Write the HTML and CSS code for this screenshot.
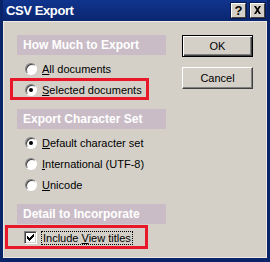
FILE: index.html
```html
<!DOCTYPE html>
<html>
  <head>
    <meta charset="UTF-8">
    <title>CSV Export</title>
    <link rel="stylesheet" href="styles.css">
  </head>
  <body>
    <div class="window">
      <div class="titlebar">
        <span class="title">CSV Export</span>
        <span class="caption-btns">
          <span class="cap-btn">?</span>
          <span class="cap-btn">
            <svg width="9" height="8" viewBox="0 0 9 8">
              <path d="M1 0h2l1.5 2.5L6 0h2L5.5 4 8 8H6L4.5 5.5 3 8H1l2.5-4z" fill="#000"/>
            </svg>
          </span>
        </span>
      </div>

      <div class="client">
        <div class="options">
          <section class="group">
            <div class="group-head">How Much to Export</div>
            <div class="row"><span class="radio"></span><span><u>A</u>ll documents</span></div>
            <div class="row"><span class="radio checked"></span><span><u>S</u>elected documents</span></div>
          </section>

          <section class="group">
            <div class="group-head">Export Character Set</div>
            <div class="row"><span class="radio checked"></span><span><u>D</u>efault character set</span></div>
            <div class="row"><span class="radio"></span><span><u>I</u>nternational (UTF-8)</span></div>
            <div class="row"><span class="radio"></span><span><u>U</u>nicode</span></div>
          </section>

          <section class="group">
            <div class="group-head">Detail to Incorporate</div>
            <div class="row">
              <span class="checkbox">
                <svg width="7" height="7" viewBox="0 0 7 7">
                  <path d="M0 2h1v1h1v1h1V3h1V2h1V1h1V0h1v3H6v1H5v1H4v1H3v1H2V6H1V5H0z" fill="#000"/>
                </svg>
              </span>
              <span class="focus">Include <u>V</u>iew titles</span>
            </div>
          </section>
        </div>

        <div class="actions">
          <button class="btn default">OK</button>
          <button class="btn">Cancel</button>
        </div>

        <!-- annotation boxes drawn over the dialog -->
        <span class="mark mark-selected"></span>
        <span class="mark mark-titles"></span>
      </div>
    </div>
  </body>
</html>
```

FILE: styles.css
```css
html * {
  box-sizing: border-box;
}

body {
  margin: 0;
  background: #0a246a;
  font-family: "Liberation Sans", Arial, sans-serif;
  font-size: 11px;
  color: #000;
}

.window {
  width: 270px;
  height: 262px;
  padding: 0 3px 4px 3px;
  display: flex;
  flex-direction: column;
  background: #0a246a;
}

.titlebar {
  height: 21px;
  display: flex;
  align-items: center;
  justify-content: space-between;
  padding: 0 2px 1px 3px;
  background: linear-gradient(#10348e, #0a2670);
}

.title {
  color: #fff;
  font-weight: bold;
  font-size: 13px;
  letter-spacing: -0.4px;
}

.caption-btns {
  display: flex;
  gap: 4px;
}

.cap-btn {
  width: 15px;
  height: 15px;
  display: flex;
  align-items: center;
  justify-content: center;
  background: #d4d0c8;
  border: 1px solid;
  border-color: #fff #404040 #404040 #fff;
  box-shadow: 0 0 0 1px #061a4e;
  font-weight: bold;
  font-size: 13px;
  line-height: 1;
}

.client {
  position: relative;
  flex: 1;
  display: flex;
  gap: 16px;
  padding: 13px 0 0 13px;
  background: #d4d0c8;
  border: 1px solid #ece9e2;
}

.options {
  width: 149px;
  display: flex;
  flex-direction: column;
  gap: 9px;
}

.group-head {
  height: 20px;
  line-height: 20px;
  padding-left: 6px;
  margin-bottom: 3px;
  background: #c9bcc6;
  color: #fff;
  font-weight: bold;
  font-size: 12px;
}

.row {
  height: 21px;
  display: flex;
  align-items: center;
  padding-left: 8px;
  gap: 5px;
}

.radio {
  width: 12px;
  height: 12px;
  flex: none;
  border-radius: 50%;
  background: #fff;
  border: 1px solid;
  border-color: #808080 #fff #fff #808080;
  box-shadow: inset 1px 1px 0 #404040;
  display: flex;
  align-items: center;
  justify-content: center;
}

.radio.checked::after {
  content: "";
  width: 4px;
  height: 4px;
  border-radius: 50%;
  background: #000;
}

.checkbox {
  width: 13px;
  height: 13px;
  flex: none;
  margin-left: -1px;
  background: #fff;
  border: 1px solid;
  border-color: #808080 #fff #fff #808080;
  box-shadow: inset 1px 1px 0 #404040, inset -1px -1px 0 #d4d0c8;
  display: flex;
  align-items: center;
  justify-content: center;
}

.focus {
  padding: 0 1px;
  outline: 1px dotted #000;
  line-height: 12px;
}

.actions {
  display: flex;
  flex-direction: column;
  gap: 10px;
}

.btn {
  width: 71px;
  height: 22px;
  padding: 0;
  font-family: inherit;
  font-size: 11px;
  color: #000;
  background: #d4d0c8;
  border: 1px solid;
  border-color: #fff #404040 #404040 #fff;
  box-shadow: inset -1px -1px 0 #808080;
}

.btn.default {
  border: 1px solid #000;
  box-shadow: inset 1px 1px 0 #fff, inset -1px -1px 0 #404040, inset -2px -2px 0 #808080;
}

.mark {
  position: absolute;
  border: 3px solid #e8182a;
}

.mark-selected {
  left: 6px;
  top: 56px;
  width: 139px;
  height: 22px;
}

.mark-titles {
  left: 1px;
  top: 203px;
  width: 143px;
  height: 24px;
}
```
